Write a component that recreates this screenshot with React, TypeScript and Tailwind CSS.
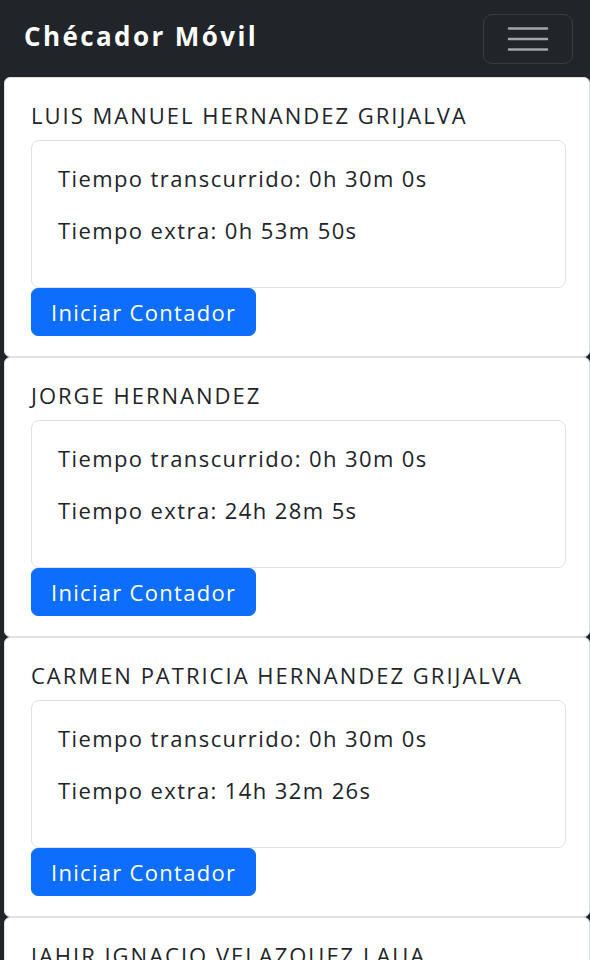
import { useState } from "react";

interface Worker {
  name: string;
  elapsed: string;
  extra: string;
}

const workers: Worker[] = [
  { name: "LUIS MANUEL HERNANDEZ GRIJALVA", elapsed: "0h 30m 0s", extra: "0h 53m 50s" },
  { name: "JORGE HERNANDEZ", elapsed: "0h 30m 0s", extra: "24h 28m 5s" },
  { name: "CARMEN PATRICIA HERNANDEZ GRIJALVA", elapsed: "0h 30m 0s", extra: "14h 32m 26s" },
  { name: "JAHIR IGNACIO VELAZQUEZ LAUA", elapsed: "0h 30m 0s", extra: "3h 12m 40s" },
];

function WorkerCard({ worker }: { worker: Worker }) {
  const [running, setRunning] = useState(false);

  return (
    <div className="bg-white border border-[#dee2e6] rounded-[6px] pl-[26px] pr-[23px] pt-[22px] pb-[20px]">
      <h5 className="text-[22px] leading-[30px] tracking-[2px] text-[#212529] mb-[10px] whitespace-nowrap">
        {worker.name}
      </h5>
      <div className="border border-[#dee2e6] rounded-[8px] px-[26px] pt-[22px] pb-[22px]">
        <p className="text-[22px] leading-[30px] tracking-[1.4px] text-[#212529] mb-[22px]">
          Tiempo transcurrido: {worker.elapsed}
        </p>
        <p className="text-[22px] leading-[30px] tracking-[1.4px] text-[#212529] mb-[20px]">
          Tiempo extra: {worker.extra}
        </p>
      </div>
      <button
        onClick={() => setRunning(!running)}
        className="bg-[#0d6efd] text-white text-[22px] leading-[30px] tracking-[1.3px] px-[19px] py-[8px] rounded-[7px] border border-[#0d6efd]"
      >
        Iniciar Contador
      </button>
    </div>
  );
}

export default function App() {
  return (
    <div className="min-h-screen bg-[#212529] font-['Open_Sans',sans-serif]">
      <nav className="h-[77px] bg-[#212529] flex items-center justify-between pl-[24px] pr-[17px]">
        <span className="text-white text-[26px] font-bold tracking-[2.4px] -mt-[5px]">Chécador Móvil</span>
        <button className="w-[90px] h-[50px] border border-white/10 rounded-[9px] flex items-center justify-center">
          <svg width="42" height="26" viewBox="0 0 42 26" fill="none">
            <path d="M2 2.5h38M2 13h38M2 23.5h38" stroke="#a3a5a7" strokeWidth="2.6" strokeLinecap="round" />
          </svg>
        </button>
      </nav>
      <div className="pl-[4px]">
        {workers.map((w) => (
          <WorkerCard key={w.name} worker={w} />
        ))}
      </div>
    </div>
  );
}
